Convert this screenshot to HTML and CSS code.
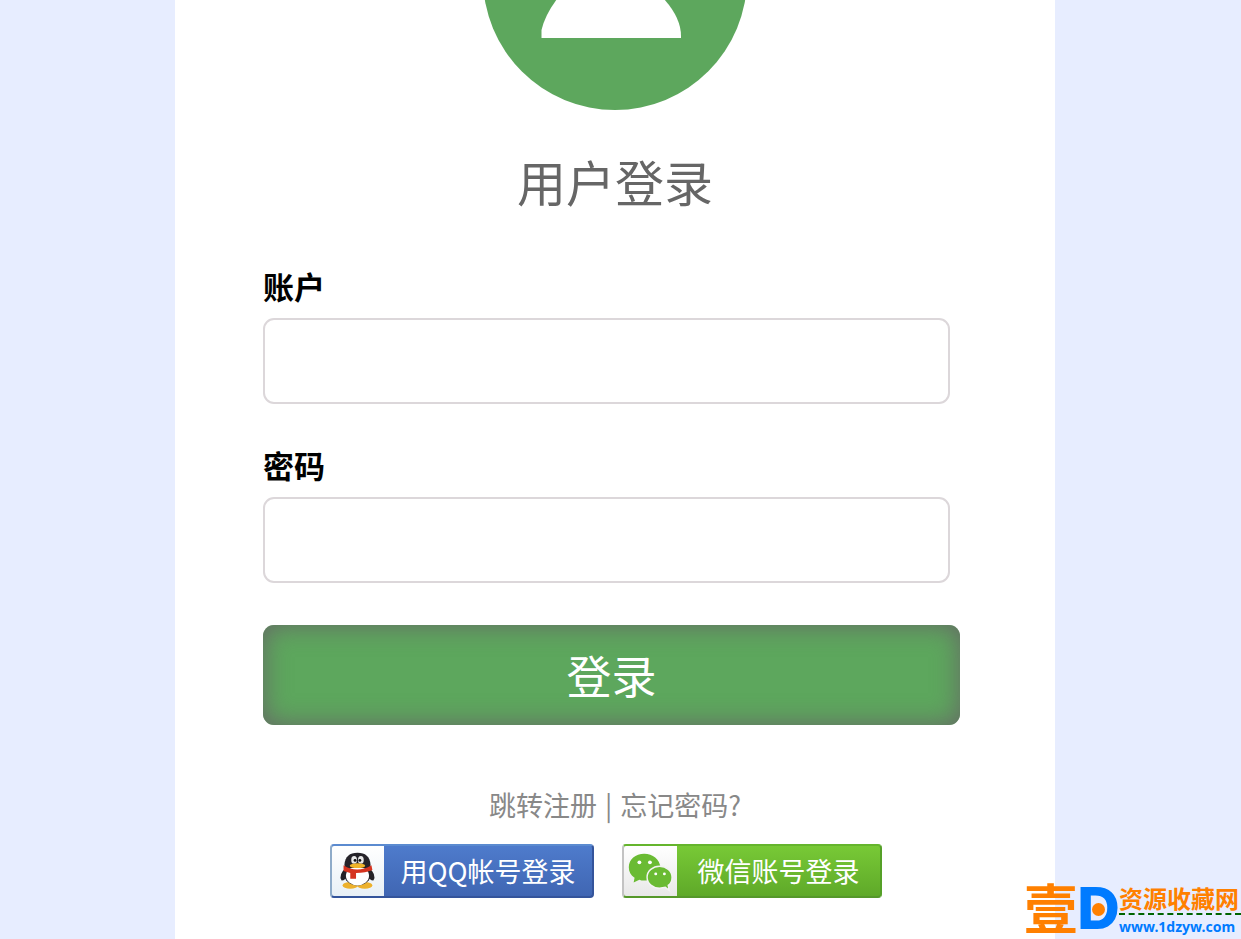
FILE: index.html
```html
<!DOCTYPE html>
<html lang="zh-CN">
<head>
<meta charset="utf-8">
<meta name="viewport" content="width=device-width, initial-scale=1">
<title>用户登录</title>
<link rel="stylesheet" href="styles.css">
</head>
<body>
<div class="page">
  <main class="card">
    <svg class="avatar" viewBox="0 154 264 110" aria-hidden="true">
      <circle cx="132" cy="132" r="132" fill="#5da75d"/>
      <path d="M58.500 192 V184 Q62 169 74 153 H181 Q198 172 198 190 V192 Z" fill="#fff"/>
    </svg>
    <h1 class="title">用户登录</h1>
    <form class="form">
      <label class="label" for="account">账户</label>
      <input class="field" id="account" type="text">
      <label class="label" for="password">密码</label>
      <input class="field" id="password" type="password">
      <button class="submit" type="submit">登录</button>
    </form>
    <p class="links"><a href="#register">跳转注册</a><span>|</span><a href="#forgot">忘记密码?</a></p>
    <div class="social">
      <button class="social-button qq" type="button">
        <span class="social-icon">
          <svg viewBox="0 0 52 52" aria-hidden="true">
            <ellipse cx="19" cy="41" rx="8" ry="3.500" fill="#edb12c"/>
            <ellipse cx="34" cy="41" rx="8" ry="3.500" fill="#edb12c"/>
            <path d="M15 22 Q6 30 10 36 Q14 36 17 30 M38 22 Q47 30 43 36 Q39 36 36 30" fill="#222127"/>
            <ellipse cx="26.500" cy="29" rx="14" ry="12" fill="#252329"/>
            <ellipse cx="26.500" cy="31" rx="12" ry="10" fill="#fff"/>
            <path d="M13 23 V19 Q14 7 26.500 7 Q39 7 40 19 V23 Z" fill="#252329"/>
            <ellipse cx="23" cy="14.500" rx="3" ry="4" fill="#e8e8e8"/>
            <ellipse cx="30" cy="14.500" rx="3" ry="4" fill="#e8e8e8"/>
            <circle cx="24" cy="15" r="1.500" fill="#111"/>
            <circle cx="29" cy="15" r="1.500" fill="#111"/>
            <ellipse cx="26.500" cy="20.500" rx="8" ry="2.500" fill="#f0b429"/>
            <path d="M12 20 Q26 29 41 20 L42 25 Q35 28 25 28 V34 H19 V28 L12 26 Z" fill="#d5331f"/>
          </svg>
        </span>
        <span class="social-text">用QQ帐号登录</span>
      </button>
      <button class="social-button wechat" type="button">
        <span class="social-icon">
          <svg viewBox="0 0 54 52" aria-hidden="true">
            <path d="M21 8 C12 8 5 14 5 22 C5 27 7 30 11 33 L10 38 L16 35 Q20 37 26 35 L38 22 C37 14 30 8 21 8 Z" fill="#6abb33"/>
            <circle cx="16" cy="17" r="2" fill="#fff"/>
            <circle cx="27" cy="17" r="2" fill="#fff"/>
            <path d="M37 21 C30 21 24 26 24 32.500 C24 39 30 44 37 44 L43 43 L47 46 L46 41 C49 39 50 36 50 32.500 C50 26 44 21 37 21 Z" fill="#6abb33" stroke="#f3f3f3" stroke-width="1.500"/>
            <circle cx="33" cy="29" r="1.500" fill="#fff"/>
            <circle cx="42" cy="29" r="1.500" fill="#fff"/>
          </svg>
        </span>
        <span class="social-text">微信账号登录</span>
      </button>
    </div>
  </main>
</div>
<aside class="brand">
  <span class="brand-mark">壹</span>
  <span class="brand-letter">D</span>
  <span class="brand-side">
    <span class="brand-name">资源收藏网</span>
    <span class="brand-url">www.1dzyw.com</span>
  </span>
</aside>
</body>
</html>
```
FILE: styles.css
```css
* {
  box-sizing: border-box;
}

body {
  margin: 0;
  background: #e7edff;
  font-family: "Noto Sans", "Noto Sans CJK SC", sans-serif;
}

.page {
  display: grid;
  grid-template-columns: 175fr 880fr 186fr;
  min-height: 100vh;
}

.card {
  grid-column: 2;
  padding: 0 10% 40px;
  background: #fff;
}

.avatar {
  display: block;
  width: 264px;
  margin: 0 auto;
}

.title {
  margin: 35px 0 49px;
  color: #666;
  font: 400 49px/72px "Noto Sans CJK SC", sans-serif;
  text-align: center;
}

.form {
  display: flex;
  flex-direction: column;
  align-items: flex-start;
}

.label {
  margin-bottom: 12px;
  font: 700 31px/40px "Noto Sans CJK SC", sans-serif;
}

.field {
  width: 98%;
  max-width: 687px;
  height: 86px;
  margin-bottom: 41px;
  padding: 0 20px;
  border: 2px solid #dcd7da;
  border-radius: 11px;
  background: #fff;
  font-size: 30px;
}

.submit {
  width: 99%;
  height: 100px;
  margin-top: 1px;
  padding: 0;
  border: 0;
  border-radius: 11px;
  background: #5da75d;
  box-shadow: inset 0 0 27px #666;
  color: #fff;
  font: 400 45px/66px "Noto Sans CJK SC", sans-serif;
}

.links {
  display: flex;
  justify-content: center;
  gap: 8px;
  margin: 60px 0 19px;
  color: #888;
  font: 400 27px/40px "Noto Sans CJK SC", sans-serif;
}

.links a {
  color: inherit;
  text-decoration: none;
}

.social {
  display: flex;
  justify-content: center;
  gap: 28px;
  padding-right: 18px;
}

.social-button {
  display: flex;
  height: 54px;
  padding: 0;
  overflow: hidden;
  border: 2px solid;
  border-radius: 4px;
  color: #fff;
  font: 400 27px/50px "Noto Sans CJK SC", sans-serif;
}

.social-icon {
  width: 52px;
  height: 50px;
}

.social-icon svg {
  display: block;
  height: 50px;
}

.social-text {
  flex: 1;
  text-align: center;
}

.qq {
  width: 264px;
  border-color: #5b8bd0 #34549b #34549b #8eabc9;
  background: linear-gradient(#4e7bcc, #4066b3);
}

.qq .social-icon {
  background: linear-gradient(#fff, #e8f0f6);
}

.wechat {
  width: 260px;
  border-color: #65b52d #55a028 #55982a #c3c3c3;
  background: linear-gradient(#78c936, #5fa929);
}

.wechat .social-icon {
  width: 53px;
  background: linear-gradient(#fff, #e8e8e8);
}

.brand {
  position: absolute;
  right: 0;
  bottom: 0;
  display: flex;
  color: #ff8000;
}

.brand-mark {
  font: 700 54px/60px "Noto Sans CJK SC", sans-serif;
}

.brand-letter {
  position: relative;
  color: #007bff;
  font: 700 57px/62px "Liberation Sans", sans-serif;
  -webkit-text-stroke: 2px #007bff;
}

.brand-letter::after {
  position: absolute;
  top: 26px;
  left: 14px;
  width: 13px;
  height: 13px;
  border-radius: 50%;
  background: #ff8000;
  content: "";
}

.brand-side {
  display: flex;
  flex-direction: column;
  width: 122px;
  padding-top: 6px;
}

.brand-name {
  border-bottom: 2px dashed #006400;
  font: 700 24px/30px "Noto Sans CJK SC", sans-serif;
  white-space: nowrap;
}

.brand-url {
  color: #007bff;
  font: 700 14px/24px "Noto Sans", sans-serif;
}
```
